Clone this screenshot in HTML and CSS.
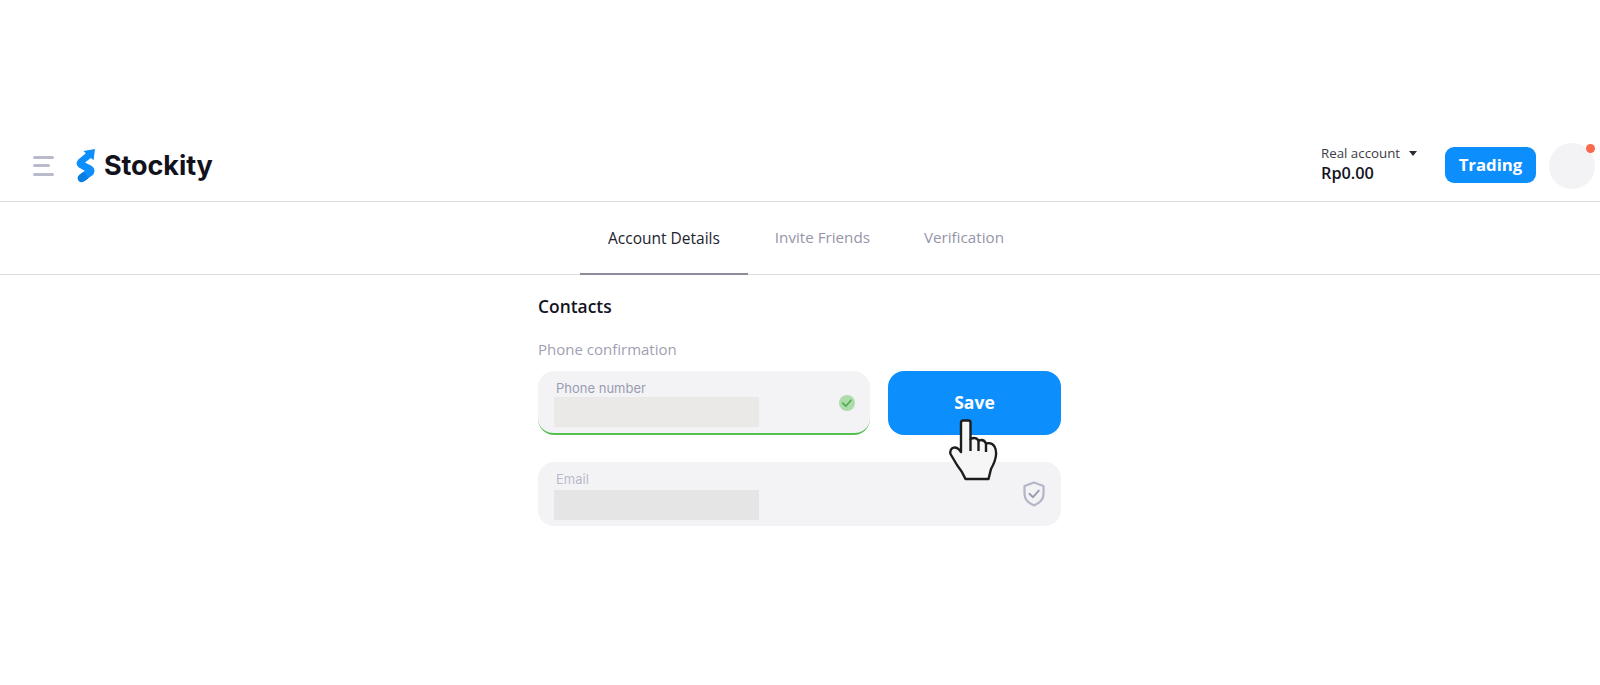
FILE: index.html
```html
<!DOCTYPE html>
<html lang="en">
<head>
  <meta charset="UTF-8">
  <title>Stockity - Account Details</title>
  <link rel="stylesheet" href="styles.css">
</head>
<body>

  <!-- Top bar -->
  <header class="topbar">
    <div class="brand">
      <div class="burger"><span></span><span class="short"></span><span></span></div>
      <svg class="logo-mark" width="19" height="34" viewBox="0 0 20 36">
        <path d="M20 0 L18.6 12 L15.6 9.4 L9.5 14.2 L16.6 18 Q20 20 19.4 24 L18.4 27 L9 34 Q5 36.5 2.6 33.4 Q0.6 30 3.4 27.4 L9.2 23 L2.6 19.2 Q-0.6 16.6 1.2 13 L2.4 11 L10.4 4.6 L7.8 2.2 Z" fill="#0d8efd"/>
        <path d="M9 34 Q5 36.5 2.6 33.4 Q0.6 30 3.4 27.4 L7 24.8 Q12 25 12.4 31.6 Z" fill="#0b7ce0"/>
      </svg>
      <span class="logo-text">Stockity</span>
    </div>
    <div class="account">
      <div class="balance">
        <div class="balance-type">Real account <span class="caret"></span></div>
        <div class="balance-sum">Rp0.00</div>
      </div>
      <button class="trading-btn">Trading</button>
      <div class="avatar"><span class="dot"></span></div>
    </div>
  </header>

  <!-- Tabs -->
  <nav class="tabs">
    <a class="tab active">Account Details</a>
    <a class="tab">Invite Friends</a>
    <a class="tab">Verification</a>
  </nav>

  <main class="content">
    <h2>Contacts</h2>
    <div class="sub-label">Phone confirmation</div>

    <div class="phone-row">
      <div class="field field-ok">
        <label>Phone number</label>
        <div class="hidden-value warm"></div>
        <span class="check-icon">
          <svg width="16" height="16" viewBox="0 0 16 16">
            <circle cx="8" cy="8" r="8" fill="#aedbaa"/>
            <path d="M3.8 8.2 L6.8 11.2 L12 5.2" fill="none" stroke="#4fae52" stroke-width="1.7" stroke-linecap="round" stroke-linejoin="round"/>
          </svg>
        </span>
      </div>
      <button class="save-btn">Save</button>
    </div>

    <div class="field field-email">
      <label>Email</label>
      <div class="hidden-value"></div>
      <svg class="shield-icon" width="22" height="26" viewBox="0 0 22 26">
        <path d="M11 1.5 L20.5 5 V13 Q20.5 20.5 11 24.5 Q1.5 20.5 1.5 13 V5 Z" fill="none" stroke="#b3b6c6" stroke-width="2.2" stroke-linejoin="round"/>
        <path d="M6.4 12.8 L10 16.2 L15.8 9.6" fill="none" stroke="#9a9dae" stroke-width="1.9" stroke-linecap="round" stroke-linejoin="round"/>
      </svg>
    </div>

    <!-- Hand pointer lying over the button -->
    <svg class="hand" width="50" height="62" viewBox="0 0 50 62">
      <path d="M12 3.5 Q12 1.5 14 1.5 H19.5 Q21.5 1.5 21.5 3.5 V20 Q27 17.5 29.5 21.5 Q35 19.5 37 24.5 Q43 23 45.5 27.5 Q47.5 31 47 36 Q46.5 42 42 50 L39.5 60 H16.5 Q13 52 8 46 L1.5 35 Q0.5 31 3.5 29 Q7 27.5 10 30.5 L12 33 Z" fill="#f6f6f6" stroke="#1d1d1d" stroke-width="2.4" stroke-linejoin="round"/>
      <path d="M21.5 20 V32 M29.5 21.5 V32 M37 24.5 V33" fill="none" stroke="#1d1d1d" stroke-width="2.4"/>
    </svg>
  </main>

</body>
</html>
```

FILE: styles.css
```css
body {
  margin: 0;
  height: 685px;
  overflow: hidden;
  background: #fff;
  color: #14141f;
  font-family: 'Open Sans', 'Noto Sans', sans-serif;
}

.topbar {
  margin-top: 131px;
  height: 71px;
  box-sizing: border-box;
  padding: 0 5px 1px 33px;
  display: flex;
  align-items: center;
  justify-content: space-between;
  border-bottom: 1px solid #dcdde1;
}

.brand {
  display: flex;
  align-items: center;
}

.burger {
  width: 21px;
  display: flex;
  flex-direction: column;
  gap: 5.5px;
  margin-right: 22px;
}

.burger span {
  display: block;
  height: 3px;
  border-radius: 2px;
  background: #b9bbcc;
}

.burger .short {
  width: 17px;
}

.logo-mark {
  margin-right: 9px;
}

.logo-text {
  font-family: 'Inter', sans-serif;
  font-size: 27px;
  font-weight: 700;
  letter-spacing: -0.1px;
  color: #12121d;
}

.account {
  display: flex;
  align-items: center;
}

.balance {
  width: 124px;
  margin-bottom: 3px;
}

.balance-type {
  font-size: 13.3px;
  line-height: 18px;
  color: #3c3c46;
}

.caret {
  display: inline-block;
  margin-left: 5px;
  margin-bottom: 2px;
  border-left: 4.5px solid transparent;
  border-right: 4.5px solid transparent;
  border-top: 5px solid #2a2a35;
}

.balance-sum {
  font-size: 16.3px;
  font-weight: 600;
  line-height: 22px;
  color: #14141f;
}

.trading-btn {
  width: 91px;
  height: 36px;
  margin-bottom: 2px;
  padding: 0 0 1px;
  border: none;
  border-radius: 9px;
  background: #0d8efd;
  color: #fff;
  font-family: inherit;
  font-size: 16.8px;
  font-weight: 700;
}

.avatar {
  position: relative;
  width: 46px;
  height: 46px;
  margin-left: 13px;
  border-radius: 50%;
  background: #f3f3f5;
}

.dot {
  position: absolute;
  top: 1px;
  right: 0;
  width: 9px;
  height: 9px;
  border-radius: 50%;
  background: #f96a4b;
}

.tabs {
  height: 73px;
  box-sizing: border-box;
  padding-left: 580px;
  display: flex;
  border-bottom: 1px solid #dcdde1;
}

.tab {
  height: 72px;
  box-sizing: border-box;
  padding: 0 27px 2px;
  display: flex;
  align-items: center;
  font-size: 15.2px;
  color: #9496a8;
}

.tab.active {
  padding: 0 28px;
  font-size: 15.5px;
  color: #22222e;
  border-bottom: 2px solid #8b8c9c;
  height: 73px;
}

.content {
  position: relative;
  width: 523px;
  margin-left: 538px;
  padding-top: 19px;
}

h2 {
  margin: 0;
  font-size: 17.4px;
  line-height: 24px;
  font-weight: 600;
  color: #14141f;
}

.sub-label {
  margin-top: 19px;
  font-size: 15px;
  line-height: 24px;
  color: #9fa1b2;
}

.phone-row {
  display: flex;
  gap: 18px;
  margin-top: 10px;
}

.field {
  position: relative;
  box-sizing: border-box;
  height: 64px;
  border-radius: 16px;
  background: #f3f3f6;
  padding: 10px 16px 0;
}

.field label {
  display: block;
  padding-left: 2px;
  font-family: 'Inter', sans-serif;
  font-size: 13px;
  line-height: 15px;
  color: #9a9cb0;
}

.field-ok {
  width: 332px;
  border-bottom: 2.5px solid #55c04f;
}

.field-email {
  margin-top: 27px;
}

.field-email label {
  color: #b9bbca;
}

.hidden-value {
  width: 205px;
  height: 30px;
  margin-top: 1px;
  background: #e5e5e6;
}

.field-email .hidden-value {
  margin-top: 3px;
}

.hidden-value.warm {
  background: #ebe9e8;
}

.check-icon {
  position: absolute;
  top: 24px;
  right: 15px;
  line-height: 0;
}

.shield-icon {
  position: absolute;
  top: 19px;
  right: 16px;
}

.save-btn {
  width: 173px;
  height: 64px;
  padding: 0 0 2px;
  border: none;
  border-radius: 16px;
  background: #0d8efd;
  color: #fff;
  font-family: inherit;
  font-size: 17.5px;
  font-weight: 700;
}

.hand {
  position: absolute;
  top: 144px;
  left: 411px;
}
```
